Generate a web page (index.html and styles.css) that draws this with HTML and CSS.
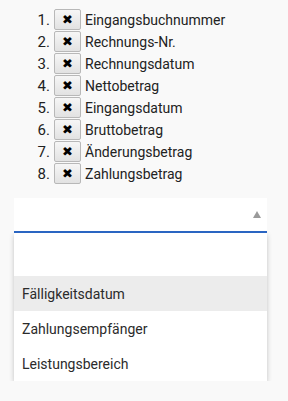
FILE: index.html
```html
<!DOCTYPE html>
<html lang="de">
<head>
<meta charset="utf-8">
<link rel="stylesheet" href="styles.css">
</head>
<body>
<ol class="fields">
  <li class="field"><span class="num">1.</span><button class="remove">✖</button><span class="label">Eingangsbuchnummer</span></li>
  <li class="field"><span class="num">2.</span><button class="remove">✖</button><span class="label">Rechnungs-Nr.</span></li>
  <li class="field"><span class="num">3.</span><button class="remove">✖</button><span class="label">Rechnungsdatum</span></li>
  <li class="field"><span class="num">4.</span><button class="remove">✖</button><span class="label">Nettobetrag</span></li>
  <li class="field"><span class="num">5.</span><button class="remove">✖</button><span class="label">Eingangsdatum</span></li>
  <li class="field"><span class="num">6.</span><button class="remove">✖</button><span class="label">Bruttobetrag</span></li>
  <li class="field"><span class="num">7.</span><button class="remove">✖</button><span class="label">Änderungsbetrag</span></li>
  <li class="field"><span class="num">8.</span><button class="remove">✖</button><span class="label">Zahlungsbetrag</span></li>
</ol>
<div class="select">
  <div class="select-box"><span class="arrow"></span></div>
  <div class="dropdown">
    <div class="search"></div>
    <div class="option active">Fälligkeitsdatum</div>
    <div class="option">Zahlungsempfänger</div>
    <div class="option">Leistungsbereich</div>
  </div>
</div>
</body>
</html>
```
FILE: styles.css
```css
html, body {
  margin: 0;
  padding: 0;
  background: #f9f9f9;
  font-family: Roboto, "Noto Sans", sans-serif;
  color: #222;
}
.fields {
  list-style: none;
  margin: 0;
  padding: 9px 0 0 0;
  display: flex;
  flex-direction: column;
  gap: 1px;
}
.field {
  display: flex;
  align-items: center;
  height: 21px;
  font-size: 14px;
}
.num {
  width: 54px;
  text-align: right;
  padding-right: 4px;
  box-sizing: border-box;
  font-size: 15px;
}
.remove {
  width: 27px;
  height: 21px;
  margin: 0;
  padding: 0;
  border: 1px solid #b8b8b8;
  border-radius: 2px;
  background: linear-gradient(#f6f6f6, #e2e2e2);
  font-size: 13px;
  line-height: 1;
  color: #000;
  font-family: "DejaVu Sans", sans-serif;
}
.label {
  padding-left: 4px;
  font-size: 14px;
}
.select {
  margin: 14px 0 0 14px;
  width: 253px;
}
.select-box {
  height: 33px;
  background: #fff;
  border-bottom: 2px solid #2a65c2;
  position: relative;
}
.arrow {
  position: absolute;
  right: 6px;
  top: 13px;
  width: 0;
  height: 0;
  border-left: 4px solid transparent;
  border-right: 4px solid transparent;
  border-bottom: 7px solid #9a9a9a;
}
.dropdown {
  background: #fff;
  box-shadow: 0 2px 5px rgba(0,0,0,0.22);
}
.search {
  height: 43px;
}
.option {
  height: 35px;
  display: flex;
  align-items: center;
  padding-left: 8px;
  font-size: 14px;
  color: #2b2b2b;
}
.option.active {
  background: #ececec;
}
```
